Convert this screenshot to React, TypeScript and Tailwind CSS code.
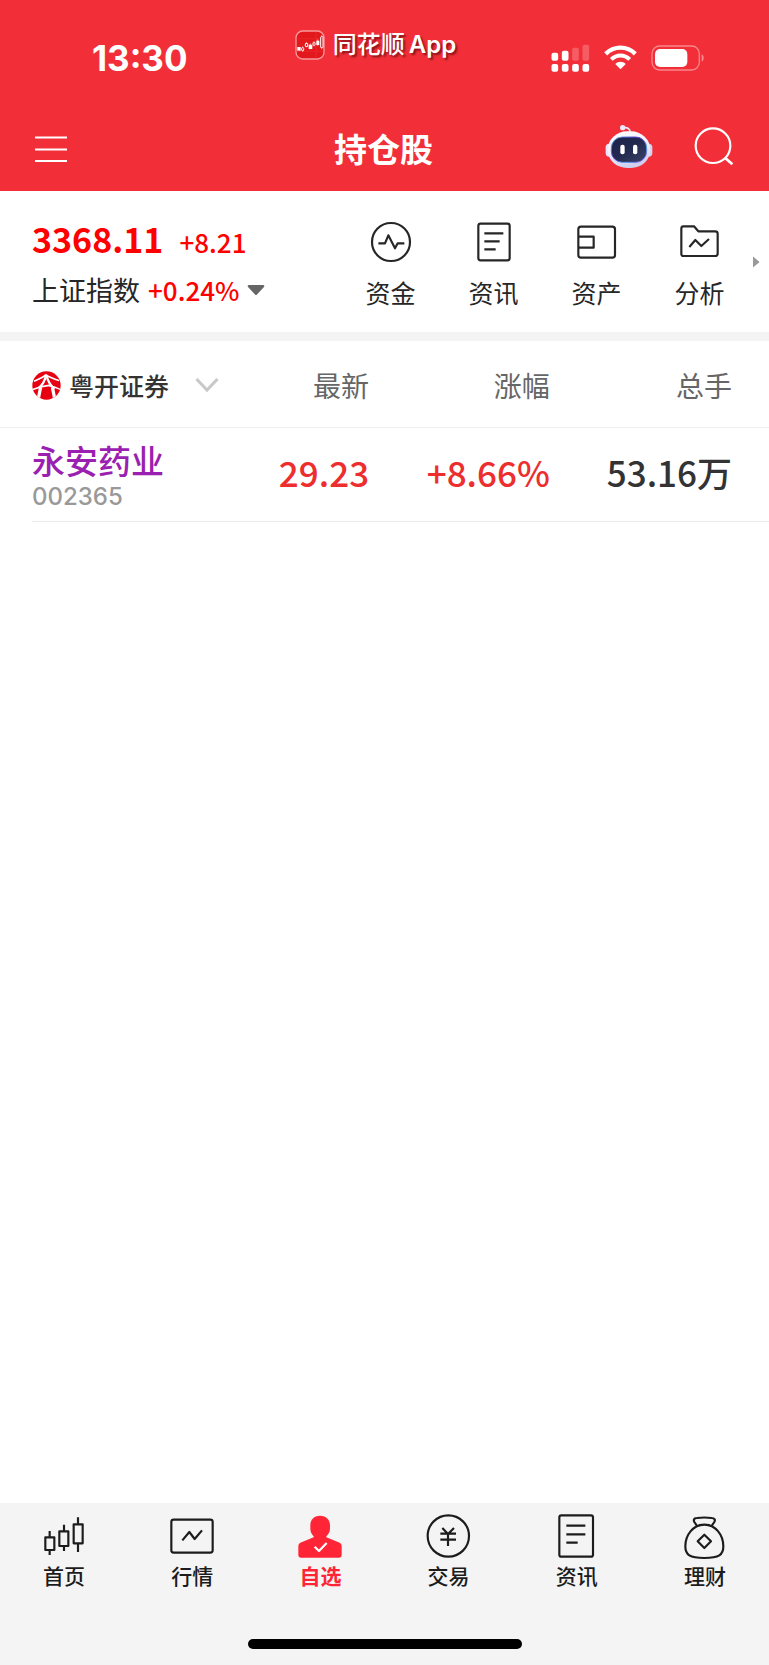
import type { ReactNode } from "react";

const CJK = "font-['Noto_Sans_CJK_SC',sans-serif]";
const LATIN = "font-['Inter','Noto_Sans_CJK_SC',sans-serif]";

function QuickIcon({ children }: { children: ReactNode }) {
  return (
    <svg viewBox="0 0 132 132" className="size-11" fill="none" stroke="#262626" strokeWidth="6.5" strokeLinejoin="round" aria-hidden="true">
      {children}
    </svg>
  );
}

function TabIcon({ children }: { children: ReactNode }) {
  return (
    <svg viewBox="0 0 144 144" className="size-12" fill="none" stroke="#1c1c1c" strokeWidth="6.5" strokeLinejoin="round" aria-hidden="true">
      {children}
    </svg>
  );
}

function AppLogo() {
  return (
    <svg viewBox="0 0 90 90" className="size-[30px]" aria-hidden="true">
      <rect x="3" y="3" width="84" height="84" rx="20" fill="#e2181d" stroke="#f8999c" strokeWidth="4" />
      <path d="M5 26h80M5 64h80M63 5v80" stroke="#ee3539" strokeWidth="1.5" />
      <g fill="#fff">
        <rect x="7" y="51" width="10" height="11" />
        <rect x="41" y="44" width="11" height="13" />
        <rect x="64" y="32" width="9" height="13" />
      </g>
      <g fill="none" stroke="#fff" strokeWidth="3">
        <rect x="20" y="53" width="6" height="9" rx="2" />
        <rect x="31" y="40" width="7" height="10" rx="2" />
        <rect x="54" y="37" width="6" height="9" rx="2" />
        <rect x="77" y="20" width="7" height="33" rx="2" />
        <path d="M23 49v4M23 62v4M34 36v4M46 40v18M57 34v3M57 46v3M68 28v20M80 15v5M80 53v5" strokeWidth="1.5" />
      </g>
    </svg>
  );
}

function SignalIcon() {
  return (
    <svg viewBox="0 0 116 84" className="h-7 w-[39px]" fill="#fff" aria-hidden="true">
      <rect x="1" y="26" width="20" height="24" rx="6" />
      <rect x="32" y="20" width="20" height="30" rx="6" />
      <rect x="63" y="11" width="20" height="39" rx="6" opacity=".22" />
      <rect x="94" y="2" width="20" height="48" rx="6" opacity=".22" />
      <rect x="1" y="60" width="20" height="23" rx="6" />
      <rect x="32" y="60" width="20" height="23" rx="6" />
      <rect x="63" y="60" width="20" height="23" rx="6" />
      <rect x="94" y="60" width="20" height="23" rx="6" />
    </svg>
  );
}

function WifiIcon() {
  return (
    <svg viewBox="0 0 100 76" className="h-[25px] w-[33px]" fill="none" stroke="#fff" strokeWidth="13" aria-hidden="true">
      <path d="M5 27C30 2 70 2 95 27" />
      <path d="M22 44C38 28 62 28 78 44" strokeWidth="12" />
      <path d="M50 74L34 58C43 49 57 49 66 58Z" fill="#fff" stroke="none" />
    </svg>
  );
}

function BatteryIcon() {
  return (
    <svg viewBox="0 0 162 78" className="h-[26px] w-[54px]" aria-hidden="true">
      <rect x="3" y="3" width="142" height="72" rx="23" fill="none" stroke="#fff" strokeOpacity=".42" strokeWidth="4" />
      <rect x="12" y="12" width="97" height="54" rx="15" fill="#fff" />
      <path d="M152 28c8 3 8 19 0 22z" fill="#fff" opacity=".45" />
    </svg>
  );
}

function RobotIcon() {
  return (
    <svg viewBox="0 0 144 135" className="h-[45px] w-12" aria-hidden="true">
      <defs>
        <linearGradient id="shell" x1="0" y1="0" x2=".3" y2="1">
          <stop offset="0" stopColor="#ffffff" />
          <stop offset=".6" stopColor="#eeedfc" />
          <stop offset="1" stopColor="#d0d0ee" />
        </linearGradient>
        <linearGradient id="rim" x1="0" y1="0" x2="1" y2="1">
          <stop offset="0" stopColor="#5fc9f2" />
          <stop offset=".4" stopColor="#6a35d8" />
          <stop offset=".7" stopColor="#4f9df0" />
          <stop offset="1" stopColor="#8b3fe8" />
        </linearGradient>
        <linearGradient id="visor" x1="0" y1="0" x2="1" y2="1">
          <stop offset="0" stopColor="#1c2148" />
          <stop offset=".5" stopColor="#232a50" />
          <stop offset="1" stopColor="#3b4366" />
        </linearGradient>
      </defs>
      <path d="M54 12C67 9 76 14 75 26" fill="none" stroke="#e9e6fa" strokeWidth="5" />
      <circle cx="53" cy="11" r="8" fill="#eeeafb" />
      <rect x="2" y="59" width="22" height="39" rx="11" fill="#e8e6fb" />
      <rect x="119" y="59" width="23" height="39" rx="11" fill="#d4d4f0" />
      <rect x="8" y="22" width="128" height="110" rx="58" fill="url(#shell)" />
      <rect x="19" y="39" width="106" height="76" rx="33" fill="url(#visor)" stroke="url(#rim)" strokeWidth="3" />
      <rect x="46" y="62" width="13" height="29" rx="6" fill="#fff" />
      <rect x="84" y="62" width="13" height="29" rx="6" fill="#fff" />
    </svg>
  );
}

function BrokerLogo() {
  return (
    <svg viewBox="0 0 88 88" className="size-[29px] shrink-0" aria-hidden="true">
      <defs>
        <clipPath id="disc">
          <circle cx="44" cy="44" r="43" />
        </clipPath>
      </defs>
      <g clipPath="url(#disc)">
        <rect width="88" height="88" fill="#e60012" />
        <g fill="none" stroke="#fff">
          <path d="M6 31C22 24 34 20 42 12C53 20 66 24 82 29" strokeWidth="5" />
          <path d="M43 12C39 32 32 42 20 52" strokeWidth="7" />
          <path d="M44 12C48 32 56 44 68 54" strokeWidth="7" />
          <path d="M0 57C20 49 34 46 56 43" strokeWidth="5" />
          <path d="M50 44C64 46 76 51 88 57" strokeWidth="4" />
          <path d="M26 50L18 90M62 50L70 90" strokeWidth="10" />
        </g>
      </g>
    </svg>
  );
}

const quickLinks = [
  {
    label: "资金",
    icon: (
      <QuickIcon>
        <circle cx="66" cy="66" r="57" />
        <path d="M28 70H48L58 46L78 85L86 70H106" />
      </QuickIcon>
    ),
  },
  {
    label: "资讯",
    icon: (
      <QuickIcon>
        <rect x="19" y="11" width="94" height="110" rx="7" />
        <path d="M37 40H94M37 64H83M37 88H71" />
      </QuickIcon>
    ),
  },
  {
    label: "资产",
    icon: (
      <QuickIcon>
        <rect x="10" y="20" width="110" height="93" rx="8" />
        <path d="M11 50H56V83H11" />
      </QuickIcon>
    ),
  },
  {
    label: "分析",
    icon: (
      <QuickIcon>
        <path d="M16 19H48L61 34H111Q119 34 119 41V101Q119 108 111 108H16Q10 108 10 101V26Q10 19 16 19Z" />
        <path d="M34 81L52 60L70 78L93 57" />
      </QuickIcon>
    ),
  },
];

const tabs = [
  {
    label: "首页",
    icon: (
      <TabIcon>
        <path d="M29 57V75M29 114V129M72 38V57M72 103V117M114 16V36M114 95V120" />
        <rect x="16" y="76" width="27" height="38" />
        <rect x="58" y="58" width="27" height="44" />
        <rect x="101" y="37" width="27" height="57" />
      </TabIcon>
    ),
  },
  {
    label: "行情",
    icon: (
      <TabIcon>
        <rect x="10" y="23" width="124" height="99" rx="7" />
        <path d="M43 85L64 60L80 81L102 55" />
      </TabIcon>
    ),
  },
  {
    label: "自选",
    active: true,
    icon: (
      <TabIcon>
        <path
          d="M72 11C90 11 102 23 102 39V49C102 61 97 68 91 73V76L131 92Q137 95 137 102V130Q137 137 130 137H14Q7 137 7 130V102Q7 95 13 92L53 76V73C47 68 43 61 43 49V39C43 23 54 11 72 11Z"
          fill="#ff2436"
          stroke="none"
        />
        <path d="M56 104L69 117L92 93" stroke="#fff" />
      </TabIcon>
    ),
  },
  {
    label: "交易",
    icon: (
      <TabIcon>
        <circle cx="70" cy="72" r="62" />
        <path d="M52 48L69 66L87 48M46 65H93M46 83H93M69 66V102" />
      </TabIcon>
    ),
  },
  {
    label: "资讯",
    icon: (
      <TabIcon>
        <rect x="19" y="10" width="101" height="124" rx="6" />
        <path d="M40 41H97M40 67H97M40 92H74" />
      </TabIcon>
    ),
  },
  {
    label: "理财",
    icon: (
      <TabIcon>
        <path d="M49 43L40 30C36 22 41 18 48 18Q70 15 92 18C100 18 104 23 100 30L91 43" />
        <path d="M70 38C37 38 13 68 13 103C13 129 26 138 70 138C114 138 127 129 127 103C127 68 103 38 70 38Z" />
        <path d="M70 68L90 88L70 108L50 88Z" />
      </TabIcon>
    ),
  },
];

const holdings = [
  { name: "永安药业", code: "002365", price: "29.23", change: "+8.66%", volume: "53.16万" },
];

export default function App() {
  return (
    <div className={`flex min-h-screen flex-col bg-white text-[#262626] ${CJK}`}>
      <header className="bg-[#f22f38] text-white">
        <div className="grid h-[107px] grid-cols-3 items-center pt-2">
          <time className={`pl-[92px] text-[35px] leading-10 font-bold ${LATIN}`}>13:30</time>
          <div className="flex items-center justify-center gap-2 self-start pt-[19px] pr-[18px] text-2xl leading-9 font-medium whitespace-nowrap">
            <AppLogo />
            <span className={`flex gap-1 [text-shadow:2px_2px_2px_rgba(70,0,0,0.6)] ${LATIN}`}>
              同花顺 <span className="font-semibold">App</span>
            </span>
          </div>
          <div className="flex items-center justify-end gap-3.5 pr-16">
            <SignalIcon />
            <WifiIcon />
            <BatteryIcon />
          </div>
        </div>
        <div className="grid h-[84px] grid-cols-3 items-center pr-[34px] pl-8">
          <button type="button" aria-label="菜单" className="w-9">
            <svg viewBox="0 0 36 30" className="h-[30px] w-9" stroke="#fff" strokeWidth="2" aria-hidden="true">
              <path d="M3 3.5H35M3 15.5H35M3 27H35" />
            </svg>
          </button>
          <h1 className="pb-0.5 text-center text-[33px] leading-10 font-bold">持仓股</h1>
          <div className="flex items-center justify-end gap-10">
            <button type="button" aria-label="智能助手" className="pb-1.5">
              <RobotIcon />
            </button>
            <button type="button" aria-label="搜索" className="pb-1.5">
              <svg viewBox="0 0 126 126" className="size-[42px]" fill="none" stroke="#fff" strokeWidth="6.5" aria-hidden="true">
                <circle cx="60" cy="62" r="52" />
                <path d="M96 98L118 118" strokeWidth="8" />
              </svg>
            </button>
          </div>
        </div>
      </header>

      <section className="grid h-[150px] grid-cols-[minmax(0,339fr)_minmax(0,412fr)_18px] items-center border-b-9 border-[#f4f4f4]">
        <button type="button" className="flex flex-col gap-1 pt-1.5 pl-8 text-left whitespace-nowrap text-[#ff0000]">
          <span className="flex items-baseline gap-4 leading-11">
            <strong className="text-[34px] font-bold">3368.11</strong>
            <span className="text-[26px] font-medium">+8.21</span>
          </span>
          <span className="flex items-center gap-2 text-[27px] leading-11">
            <span className="text-[#262626]">上证指数</span>
            <span className="text-[26px] font-medium">+0.24%</span>
            <svg viewBox="0 0 18 12" className="h-3 w-[18px]" fill="#666" aria-hidden="true">
              <path d="M2 1H16Q18 1 17 3L10 10.500Q9 11.500 8 10.500L1 3Q0 1 2 1Z" />
            </svg>
          </span>
        </button>
        <div className="grid grid-cols-4 pt-1.5">
          {quickLinks.map((link) => (
            <button key={link.label} type="button" className="flex flex-col items-center gap-2.5 text-[25px] leading-9">
              {link.icon}
              {link.label}
            </button>
          ))}
        </div>
        <button type="button" aria-label="更多">
          <svg viewBox="0 0 8 12" className="ml-px h-3 w-2" fill="#999" aria-hidden="true">
            <path d="M1 .5L7 5.500Q7.500 6 7 6.500L1 11.500Z" />
          </svg>
        </button>
      </section>

      <main className="flex-1">
        <table className="w-full table-fixed border-separate border-spacing-0 text-right whitespace-nowrap">
          <colgroup>
            <col className="w-[31%]" />
            <col className="w-[17%]" />
            <col className="w-[23.500%]" />
            <col />
          </colgroup>
          <thead>
            <tr className="h-[87px] text-[28px] leading-10 text-[#666]">
              <th scope="col" className="border-b border-[#f0f0f0] p-0 pt-0.5 pl-8 font-normal">
                <button type="button" className="flex items-center gap-2 text-[25px] font-medium text-[#333]">
                  <BrokerLogo />
                  粤开证券
                  <svg viewBox="0 0 24 16" className="ml-[18px] h-4 w-6 shrink-0" fill="none" stroke="#c8c8c8" strokeWidth="3" aria-hidden="true">
                    <path d="M1.500 2L12 13L22.500 2" />
                  </svg>
                </button>
              </th>
              <th scope="col" className="border-b border-[#f0f0f0] p-0 pt-0.5 font-normal">最新</th>
              <th scope="col" className="border-b border-[#f0f0f0] p-0 pt-0.5 font-normal">涨幅</th>
              <th scope="col" className="border-b border-[#f0f0f0] p-0 pt-0.5 pr-[37px] font-normal">总手</th>
            </tr>
          </thead>
          <tbody>
            {holdings.map((row) => (
              <tr key={row.code} className="text-[35px] leading-10 font-medium text-[#ed2e2e]">
                <td className="p-0 pl-8 text-left">
                  <div className="flex h-[94px] flex-col border-b border-[#ececec] pt-2.5">
                    <span className="text-[33px] leading-11 font-medium text-[#9b1fb0]">{row.name}</span>
                    <span className={`text-2xl leading-[30px] font-medium text-[#999] ${LATIN}`}>{row.code}</span>
                  </div>
                </td>
                <td className="border-b border-[#ececec] p-0 pb-1.5">{row.price}</td>
                <td className="border-b border-[#ececec] p-0 pb-1.5">{row.change}</td>
                <td className="border-b border-[#ececec] p-0 pr-[37px] pb-1.5 text-[#333]">{row.volume}</td>
              </tr>
            ))}
          </tbody>
        </table>
      </main>

      <footer className="bg-[#f4f4f4] pt-[9px] pb-4">
        <nav className="grid grid-cols-6">
          {tabs.map((tab) => (
            <a
              key={tab.label}
              href="#"
              aria-current={tab.active ? "page" : undefined}
              className={`flex flex-col items-center text-[21px] leading-[30px] ${tab.active ? "font-bold text-[#ff2436]" : "font-medium text-[#1c1c1c]"}`}
            >
              {tab.icon}
              {tab.label}
            </a>
          ))}
        </nav>
        <div className="mx-auto mt-[49px] h-2.5 w-[274px] rounded-full bg-black" />
      </footer>
    </div>
  );
}
